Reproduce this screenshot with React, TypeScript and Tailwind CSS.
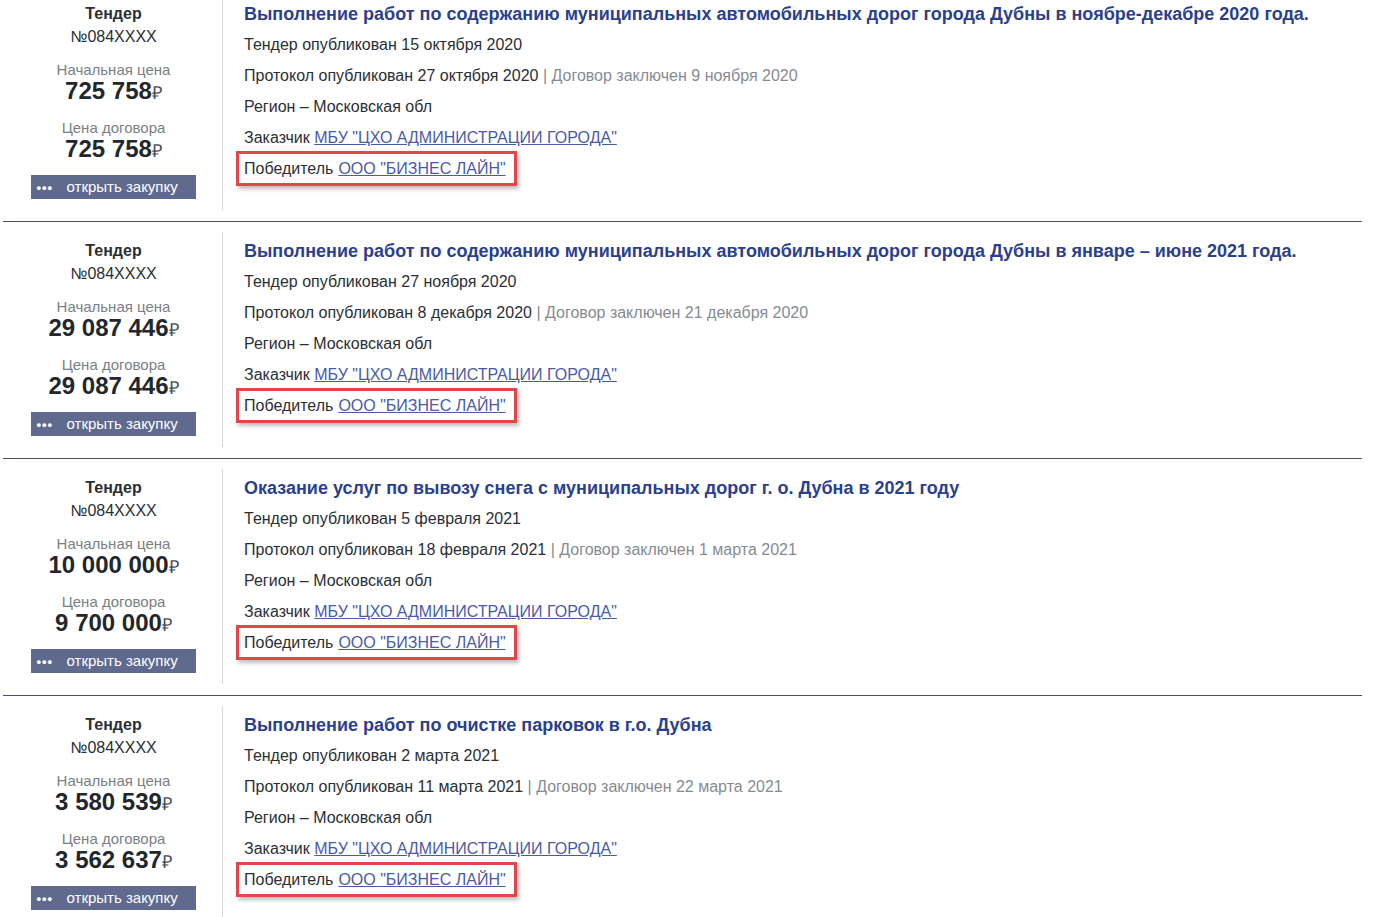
import React from "react";

interface Tender {
  number: string;
  startPrice: string;
  contractPrice: string;
  title: string;
  published: string;
  protocol: string;
  contract: string;
}

const TENDERS: Tender[] = [
  {
    number: "№084XXXX",
    startPrice: "725 758",
    contractPrice: "725 758",
    title:
      "Выполнение работ по содержанию муниципальных автомобильных дорог города Дубны в ноябре-декабре 2020 года.",
    published: "15 октября 2020",
    protocol: "27 октября 2020",
    contract: "9 ноября 2020",
  },
  {
    number: "№084XXXX",
    startPrice: "29 087 446",
    contractPrice: "29 087 446",
    title:
      "Выполнение работ по содержанию муниципальных автомобильных дорог города Дубны в январе – июне 2021 года.",
    published: "27 ноября 2020",
    protocol: "8 декабря 2020",
    contract: "21 декабря 2020",
  },
  {
    number: "№084XXXX",
    startPrice: "10 000 000",
    contractPrice: "9 700 000",
    title: "Оказание услуг по вывозу снега с муниципальных дорог г. о. Дубна в 2021 году",
    published: "5 февраля 2021",
    protocol: "18 февраля 2021",
    contract: "1 марта 2021",
  },
  {
    number: "№084XXXX",
    startPrice: "3 580 539",
    contractPrice: "3 562 637",
    title: "Выполнение работ по очистке парковок в г.о. Дубна",
    published: "2 марта 2021",
    protocol: "11 марта 2021",
    contract: "22 марта 2021",
  },
];

const Price = ({ label, value }: { label: string; value: string }) => (
  <div className="flex flex-col items-center">
    <span className="text-[15px] leading-[18px] text-[#7a7f85]">{label}</span>
    <span className="text-[24px] leading-[24px] font-bold text-[#22272e]">
      {value}
      <span className="text-[18px] font-normal text-[#4a4f55]">₽</span>
    </span>
  </div>
);

function TenderRow({ t }: { t: Tender }) {
  return (
    <div className="border-t border-[#4b5361] pt-[10px] pb-[11px]">
      <div className="flex h-[215px]">
        {/* Left column */}
        <div className="w-[220px] flex flex-col items-center border-r border-[#d3d7dc] shrink-0 pl-[2px]">
          <div className="mt-[9px] text-[16px] leading-[20px] font-bold text-[#2b2f35]">Тендер</div>
          <div className="mt-[3px] text-[16px] leading-[20px] text-[#2b2f35]">{t.number}</div>
          <div className="mt-[14px]">
            <Price label="Начальная цена" value={t.startPrice} />
          </div>
          <div className="mt-[14px]">
            <Price label="Цена договора" value={t.contractPrice} />
          </div>
          <button
            type="button"
            className="mt-[12px] w-[165px] h-[24px] bg-[#5f6a8e] text-white text-[15px] flex items-center pl-[6px] -ml-[1px]"
          >
            <span className="text-[13px] font-bold tracking-[1px] w-[30px] text-left leading-none">•••</span>
            <span>открыть закупку</span>
          </button>
        </div>

        {/* Right column */}
        <div className="pl-[21px] text-[16px] text-[#2b2f35]">
          <div className="mt-[8px] text-[18px] leading-[22px] font-bold text-[#2b3f8c] whitespace-nowrap">
            {t.title}
          </div>
          <div className="mt-[10px] leading-[19px]">Тендер опубликован {t.published}</div>
          <div className="mt-[12px] leading-[19px]">
            Протокол опубликован {t.protocol}
            <span className="text-[#868b91]"> | Договор заключен {t.contract}</span>
          </div>
          <div className="mt-[12px] leading-[19px]">Регион – Московская обл</div>
          <div className="mt-[12px] leading-[19px]">
            Заказчик{" "}
            <a href="#" className="text-[#4a5aa6] underline">
              МБУ "ЦХО АДМИНИСТРАЦИИ ГОРОДА"
            </a>
          </div>
          <div className="mt-[4px] -ml-[8px] w-[281px] h-[35px] border-[3px] border-[#e0474a] shadow-[2px_3px_4px_rgba(0,0,0,0.25)] flex items-center pl-[5px]">
            Победитель{" "}
            <a href="#" className="ml-[5px] text-[#4a5aa6] underline">
              ООО "БИЗНЕС ЛАЙН"
            </a>
          </div>
        </div>
      </div>
    </div>
  );
}

export default function App() {
  return (
    <div
      className="bg-white h-[917px] overflow-hidden"
      style={{ fontFamily: '"Liberation Sans", Arial, sans-serif' }}
    >
      <div className="ml-[3px] w-[1359px] -mt-[16px]">
        {TENDERS.map((t, i) => (
          <TenderRow key={i} t={t} />
        ))}
      </div>
    </div>
  );
}
